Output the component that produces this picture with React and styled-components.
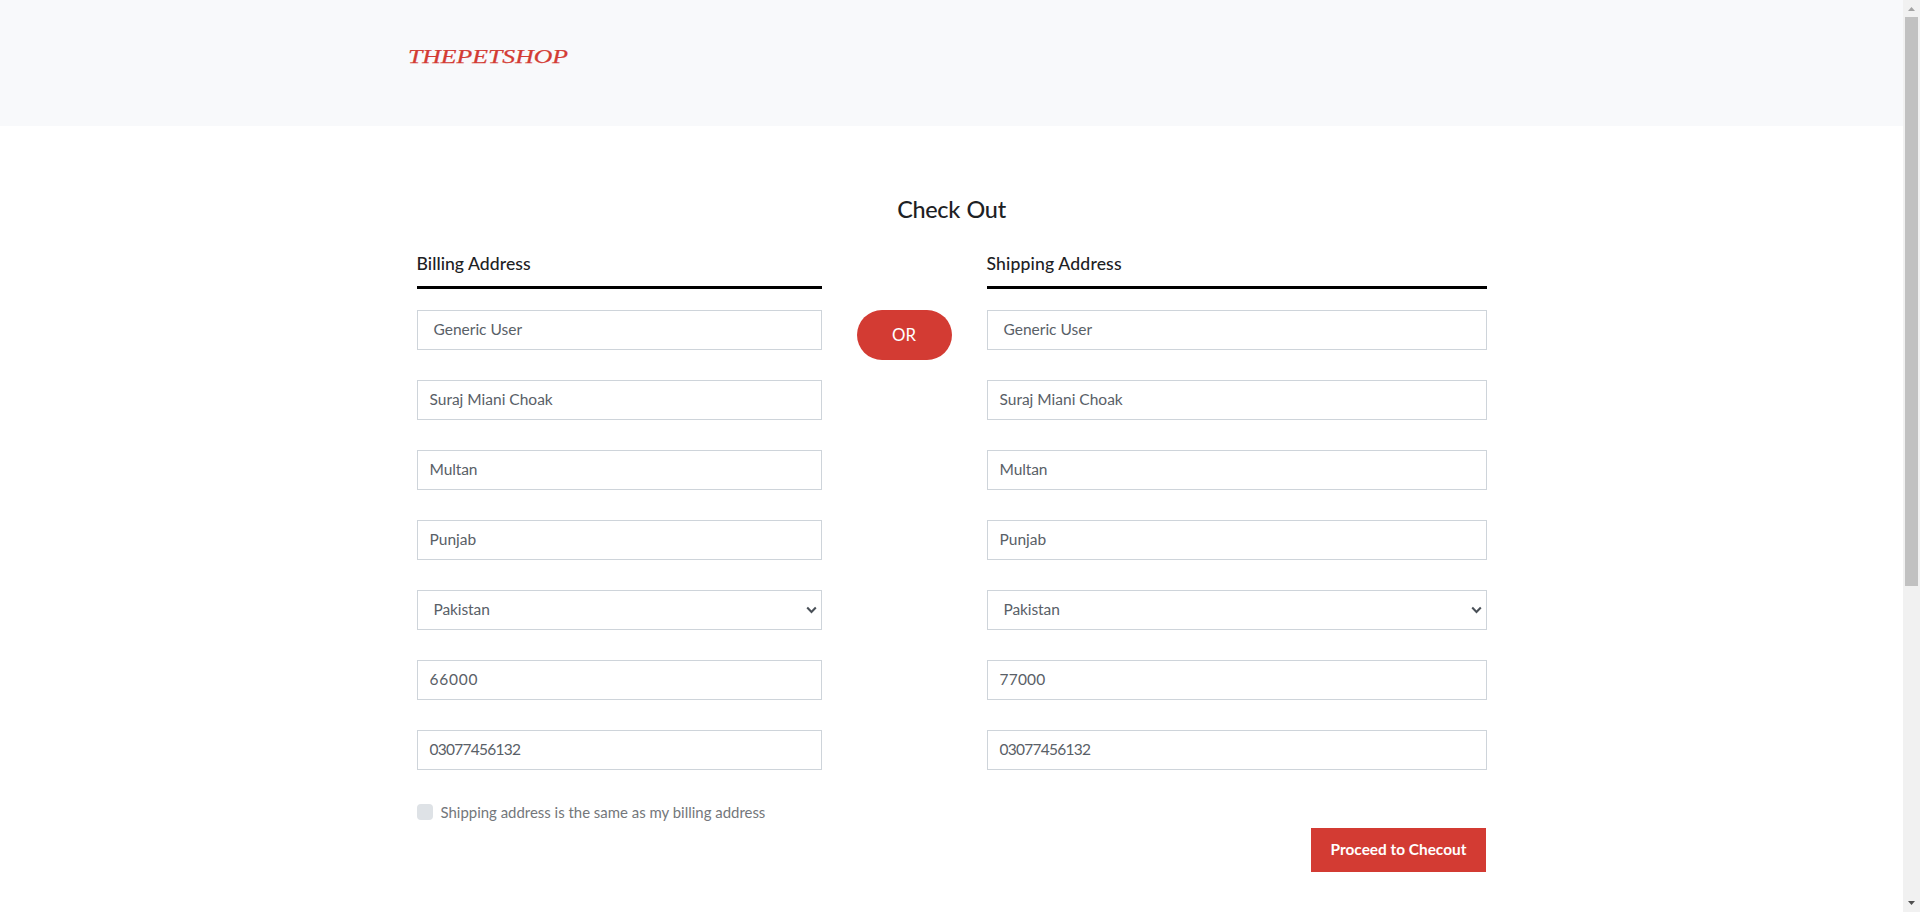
import React from 'react';
import styled, { createGlobalStyle } from 'styled-components';

const GlobalStyle = createGlobalStyle`
  *, *::before, *::after { box-sizing: border-box; }
  body {
    margin: 0;
    background: #fff;
    color: #212529;
    font-family: Lato, "Open Sans", sans-serif;
    font-size: 15.5px;
    overflow: hidden;
  }
`;

const Page = styled.div`
  display: grid;
  grid-template-columns: minmax(0, 1fr) 17px;
  height: 100vh;
`;

const Header = styled.header`
  height: 126px;
  padding: 46px 0 0 407px;
  background: #f8f9fb;
`;

const Logo = styled.svg`
  display: block;
  font-family: "Liberation Serif", "Times New Roman", serif;
  font-size: 18.5px;
  font-style: italic;
  fill: #d33b33;
  stroke: #d33b33;
  stroke-width: 0.25;
`;

const Checkout = styled.main`
  width: 1070px;
  margin: 0 auto;
  padding-top: 65px;
`;

const Title = styled.h1`
  margin: 0;
  color: #1d2124;
  font-size: 23.4px;
  font-weight: 500;
  line-height: 36px;
  letter-spacing: -0.3px;
  word-spacing: 1px;
  text-align: center;
`;

const Columns = styled.div`
  display: grid;
  grid-template-columns: 405px 95px 500px;
  column-gap: 35px;
  margin-top: 22px;
`;

const AddressForm = styled.section`
  display: flex;
  flex-direction: column;
`;

const SectionTitle = styled.h2`
  height: 40px;
  margin: 0 0 21px;
  border-bottom: 3px solid #000;
  color: #1d2124;
  font-size: 17.6px;
  font-weight: 500;
  line-height: 30px;
  letter-spacing: ${p => p.$spacing || 0}px;
`;

const Fields = styled.div`
  display: grid;
  grid-auto-rows: 40px;
  row-gap: 30px;
`;

const Field = styled.div`
  display: flex;
  align-items: center;
  justify-content: space-between;
  padding: 0 4px 0 ${p => (p.$indented ? 16 : 12)}px;
  border: 1px solid #ced4da;
  background: #fff;
  color: #596067;
  letter-spacing: ${p => p.$spacing || 0}px;
`;

const FieldValue = styled.span`
  padding-bottom: 2px;
`;

const Chevron = styled.svg`
  width: 11px;
  height: 8px;
  fill: none;
  stroke: #495057;
  stroke-width: 2.1;
`;

const OrBadge = styled.div`
  display: flex;
  align-items: center;
  justify-content: center;
  height: 50px;
  margin-top: 61px;
  padding-bottom: 2px;
  border-radius: 25px;
  background: #d33b33;
  color: #fff;
  font-size: 16.8px;
`;

const SameAddress = styled.label`
  display: flex;
  align-items: center;
  gap: 8px;
  height: 24px;
  margin-top: 30px;
  color: #74777b;
  font-size: 14.95px;
`;

const CheckBox = styled.span`
  width: 16px;
  height: 16px;
  border-radius: 4px;
  background: #dee2e6;
`;

const ProceedButton = styled.button`
  align-self: flex-end;
  width: 175px;
  height: 44px;
  margin: 58px 1px 0 0;
  padding: 0 0 2px 1px;
  border: 0;
  background: #d33b33;
  color: #fff;
  font-family: inherit;
  font-size: 15.4px;
  font-weight: 700;
`;

const Scrollbar = styled.div`
  display: flex;
  flex-direction: column;
  align-items: center;
  justify-content: space-between;
  background: #f1f1f1;
`;

const ScrollTop = styled.div`
  display: flex;
  flex-direction: column;
  align-items: center;
`;

const ScrollArrow = styled.svg`
  display: block;
  width: 17px;
  height: 17px;
  fill: ${p => p.$color};
`;

const Thumb = styled.div`
  width: 13px;
  height: 569px;
  background: #c1c1c1;
`;

const addressFields = (postcode, postcodeSpacing) => [
  { value: 'Generic User', indented: true },
  { value: 'Suraj Miani Choak' },
  { value: 'Multan', spacing: -0.1 },
  { value: 'Punjab' },
  { value: 'Pakistan', indented: true, select: true, spacing: -0.1 },
  { value: postcode, spacing: postcodeSpacing },
  { value: '03077456132', spacing: -0.75 },
];

const FieldList = ({ items }) => (
  <Fields>
    {items.map(item => (
      <Field key={item.value} $indented={item.indented} $spacing={item.spacing}>
        <FieldValue>{item.value}</FieldValue>
        {item.select && (
          <Chevron viewBox="0 0 11 8">
            <path d="M1.2 1.6 5.5 5.9 9.8 1.6" />
          </Chevron>
        )}
      </Field>
    ))}
  </Fields>
);

export default function App() {
  return (
    <>
      <GlobalStyle />
      <Page>
        <div>
          <Header>
            <Logo width="170" height="24">
              <text x="1" y="16.7" textLength="160" lengthAdjust="spacingAndGlyphs">THEPETSHOP</text>
            </Logo>
          </Header>
          <Checkout>
            <Title>Check Out</Title>
            <Columns>
              <AddressForm>
                <SectionTitle $spacing={0.05}>Billing Address</SectionTitle>
                <FieldList items={addressFields('66000', 0.75)} />
                <SameAddress>
                  <CheckBox />
                  <span>Shipping address is the same as my billing address</span>
                </SameAddress>
              </AddressForm>
              <OrBadge>OR</OrBadge>
              <AddressForm>
                <SectionTitle $spacing={0.15}>Shipping Address</SectionTitle>
                <FieldList items={addressFields('77000', 0.2)} />
                <ProceedButton>Proceed to Checout</ProceedButton>
              </AddressForm>
            </Columns>
          </Checkout>
        </div>
        <Scrollbar>
          <ScrollTop>
            <ScrollArrow $color="#a3a3a3" viewBox="0 0 17 17">
              <path d="M5 11 8.5 7 12 11Z" />
            </ScrollArrow>
            <Thumb />
          </ScrollTop>
          <ScrollArrow $color="#505050" viewBox="0 0 17 17">
            <path d="M5 6 8.5 10 12 6Z" />
          </ScrollArrow>
        </Scrollbar>
      </Page>
    </>
  );
}
